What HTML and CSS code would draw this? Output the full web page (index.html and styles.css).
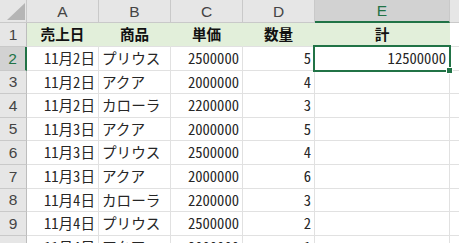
FILE: index.html
```html
<!DOCTYPE html>
<html lang="ja">

<head>
    <meta charset="UTF-8" />
    <meta name="viewport" content="width=device-width, initial-scale=1.0" />
    <title>売上</title>
    <link rel="stylesheet" href="styles.css">
</head>

<body>
    <div class="sheet" id="sheet"></div>

    <script>
        const columnas = ['A', 'B', 'C', 'D', 'E', ''];
        const encabezado = ['売上日', '商品', '単価', '数量', '計'];
        const filas = [
            ['11月2日', 'プリウス', 2500000, 5, 12500000],
            ['11月2日', 'アクア', 2000000, 4, ''],
            ['11月2日', 'カローラ', 2200000, 3, ''],
            ['11月3日', 'アクア', 2000000, 5, ''],
            ['11月3日', 'プリウス', 2500000, 4, ''],
            ['11月3日', 'アクア', 2000000, 6, ''],
            ['11月4日', 'カローラ', 2200000, 3, ''],
            ['11月4日', 'プリウス', 2500000, 2, ''],
            ['11月4日', 'アクア', 2000000, 1, '']
        ];

        function celda(clase, texto) {
            const div = document.createElement('div');
            div.className = clase;
            div.textContent = texto;
            return div;
        }

        function render() {
            const hoja = document.getElementById('sheet');

            // fila de letras de columna
            const esquina = celda('corner', '');
            esquina.innerHTML = '<svg width="18" height="17" viewBox="0 0 18 17"><polygon points="18,0 18,17 0,17" fill="#b5b5b5"/></svg>';
            hoja.appendChild(esquina);
            columnas.forEach(c => {
                hoja.appendChild(celda(c === 'E' ? 'col-head sel' : 'col-head', c));
            });

            // fila 1: títulos
            hoja.appendChild(celda('row-head', '1'));
            encabezado.forEach(t => hoja.appendChild(celda('cell title', t)));
            hoja.appendChild(celda('cell', ''));

            filas.forEach((fila, i) => {
                const n = i + 2;
                hoja.appendChild(celda(n === 2 ? 'row-head sel' : 'row-head', n));
                fila.forEach((v, j) => {
                    let clase = j === 1 ? 'cell' : 'cell num';
                    if (n === 2 && j === 4) clase += ' active';
                    hoja.appendChild(celda(clase, v));
                });
                hoja.appendChild(celda('cell', ''));
            });
        }

        render();
    </script>
</body>

</html>
```

FILE: styles.css
```css
:root {
    --green: #217346;
    --head: #e6e6e6;
    --head-sel: #d2d2d2;
    --head-line: #c9c9c9;
    --grid: #e1e1e1;
    --fill: #e2efda;
    --text: #262626;
}

* {
    box-sizing: border-box;
}

body {
    margin: 0;
    width: 459px;
    height: 243px;
    overflow: hidden;
    background: white;
    font-family: 'Noto Sans CJK JP', sans-serif;
    font-feature-settings: "hwid";
    font-size: 14.6px;
    color: var(--text);
}

.sheet {
    display: grid;
    grid-template-columns: 27px 72px 72px 72px 72px 135px 40px;
    grid-template-rows: 23px 24px 24px 23px 24px 23px 24px 24px 23px 24px 24px;
}

.sheet > div {
    display: flex;
    align-items: center;
    white-space: nowrap;
    overflow: hidden;
    line-height: 1;
}

.corner {
    background: var(--head);
    border-right: 1px solid var(--head-line);
    border-bottom: 1px solid var(--head-line);
    justify-content: flex-end;
    align-items: flex-end !important;
    padding: 0 1px 2px 0;
}

.corner svg {
    display: block;
}

.col-head,
.row-head {
    font-family: 'Liberation Sans', sans-serif;
    font-feature-settings: normal;
    font-size: 15.5px;
    color: #444;
    justify-content: center;
    background: var(--head);
    border-bottom: 1px solid var(--head-line);
}

.col-head {
    border-right: 1px solid var(--head-line);
    padding-top: 1px;
}

.col-head.sel {
    background: var(--head-sel);
    color: var(--green);
    border-bottom: 2px solid var(--green);
}

.row-head {
    border-right: 1px solid #bdbdbd;
}

.row-head.sel {
    background: var(--head-sel);
    color: var(--green);
    border-right: 2px solid var(--green);
}

.cell {
    border-right: 1px solid var(--grid);
    border-bottom: 1px solid var(--grid);
    padding: 0 3px;
}

.num {
    justify-content: flex-end;
}

.title {
    background: var(--fill);
    border-right-color: var(--fill);
    justify-content: center;
    font-weight: bold;
    color: #111;
}

/* celda activa con el cuadro de relleno */
.active {
    position: relative;
    overflow: visible !important;
}

.active::after {
    content: "";
    position: absolute;
    left: -2px;
    top: -2px;
    right: -2px;
    bottom: -2px;
    border: 2px solid var(--green);
}

.active::before {
    content: "";
    position: absolute;
    right: -4px;
    bottom: -4px;
    width: 5px;
    height: 5px;
    background: var(--green);
    border: 1px solid white;
    z-index: 1;
}
```
